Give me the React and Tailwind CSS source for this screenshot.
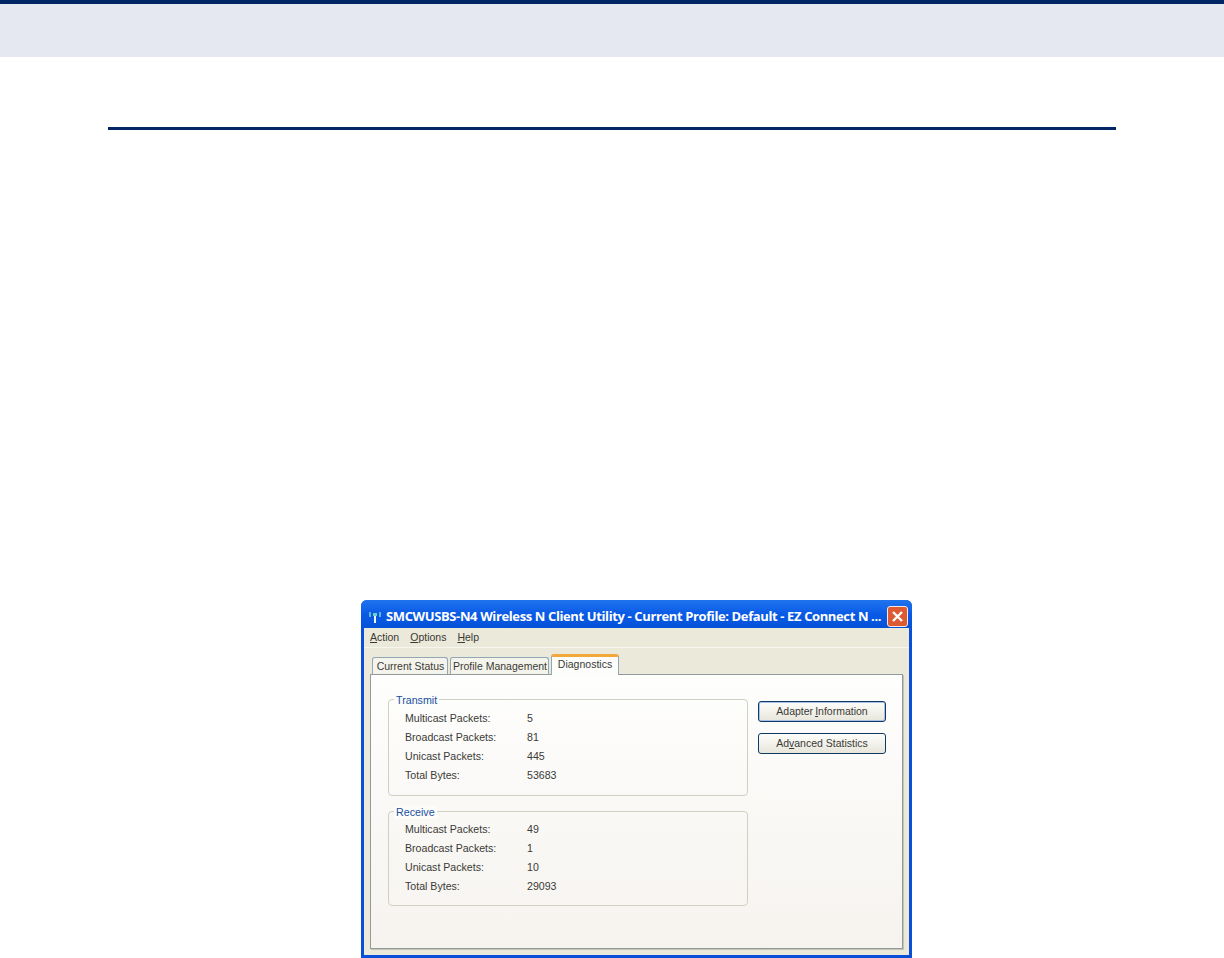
const font = "[font-family:'Liberation_Sans',Arial,sans-serif]";

function Group({ title, rows, className }) {
  return (
    <div className={`relative w-[360px] rounded-[4px] border border-[#d0d0bf] pl-[16px] ${className}`}>
      <span className="absolute left-[5px] top-[-6px] bg-[#fcfcfa] px-[2px] text-[10.7px] leading-[13px] text-[#1b4ea3]">{title}</span>
      {rows.map(([k, v]) => (
        <div key={k} className="flex h-[19px] items-center text-[10.6px] text-[#3a3a36]">
          <span className="w-[122px]">{k}</span>
          <span>{v}</span>
        </div>
      ))}
    </div>
  );
}

function Tab({ children, active, className }) {
  return active ? (
    <div className={`relative z-10 mb-[-1px] flex h-[21px] items-start justify-center whitespace-nowrap rounded-t-[3px] border-x border-[#91a7b4] border-t-[3px] border-t-[#f2a83a] bg-[#fdfdfb] text-[10.5px] leading-[14px] text-[#3a3a36] ${className}`}>
      {children}
    </div>
  ) : (
    <div className={`flex h-[17px] items-center justify-center whitespace-nowrap rounded-t-[3px] border-x border-t border-[#91a7b4] bg-[#f5f4ec] pl-[1px] pt-[1px] text-[10.5px] text-[#3a3a36] ${className}`}>
      {children}
    </div>
  );
}

function Btn({ children, focus }) {
  return (
    <div className={`flex h-[21px] w-[128px] items-center justify-center rounded-[3px] border border-[#0f3a63] bg-gradient-to-b from-[#fdfdfb] to-[#e8e6da] text-[10.5px] text-[#3a3a36] ${focus ? "shadow-[inset_0_0_0_1px_#a9c0e6]" : ""}`}>
      {children}
    </div>
  );
}

export default function App() {
  return (
    <div className={`h-[958px] w-[1224px] overflow-hidden bg-white ${font}`}>
      <div className="h-[57px] border-t-[4px] border-[#002664] bg-[#e5e8f1]" />
      <div className="mx-[108px] mt-[70px] h-[3px] w-[1008px] bg-[#002664]" />

      <div className="ml-[361px] mt-[470px] w-[551px] rounded-t-[6px] bg-[#0a4fd8]">
        <div className="flex h-[28px] items-center rounded-t-[6px] bg-gradient-to-b from-[#1f74ee] via-[#0a5ae6] to-[#0552d8] pl-[6px] pr-[4px]">
          <svg width="16" height="16" viewBox="0 0 16 16" className="mt-[3px] shrink-0">
            <path d="M7 8h2v7H7z" fill="#e8f6f4" />
            <path d="M6 5h4v3H6z" fill="#6fd0c8" />
            <path d="M2 4h2v5H2zM12 4h2v5h-2z" fill="#5fb4dc" />
          </svg>
          <span className="ml-[3px] mt-[5px] min-w-0 flex-1 overflow-hidden whitespace-nowrap font-bold text-[13px] tracking-[-0.38px] text-white [font-family:'Open_Sans',sans-serif]">
            SMCWUSBS-N4 Wireless N Client Utility - Current Profile: Default - EZ Connect N ...
          </span>
          <div className="mt-[4px] flex h-[21px] w-[21px] shrink-0 items-center justify-center rounded-[3px] border border-[#f4e8e2] bg-[#dd5a32]">
            <svg width="13" height="13" viewBox="0 0 13 13">
              <path d="M2 2l9 9M11 2l-9 9" stroke="#fff" strokeWidth="2.4" />
            </svg>
          </div>
        </div>
        <div className="mx-[3px] flex h-[20px] items-center gap-[11px] border-b border-[#f7f6ee] bg-[#ebe9d9] pl-[6px] text-[10.5px] text-[#3a3a36]">
          <span><u>A</u>ction</span>
          <span><u>O</u>ptions</span>
          <span><u>H</u>elp</span>
        </div>
        <div className="mx-[3px] h-[307px] bg-[#ebe9d9] px-[6px]">
          <div className="flex h-[26px] items-end gap-[2px] pl-[2px] pt-[6px]">
            <Tab className="w-[76px]">Current Status</Tab>
            <Tab className="w-[99px]">Profile Management</Tab>
            <Tab active className="w-[68px]">Diagnostics</Tab>
          </div>
          <div className="flex h-[275px] w-[533px] gap-[10px] border border-[#919b9c] bg-gradient-to-b from-[#fefefd] to-[#f6f3ef] pl-[17px] pt-[24px] shadow-[1px_1px_0_#c4c3b6]">
            <div className="flex flex-col">
              <Group
                title="Transmit"
                className="h-[97px] pt-[9px]"
                rows={[["Multicast Packets:", "5"], ["Broadcast Packets:", "81"], ["Unicast Packets:", "445"], ["Total Bytes:", "53683"]]}
              />
              <Group
                title="Receive"
                className="mt-[15px] h-[95px] pt-[8px]"
                rows={[["Multicast Packets:", "49"], ["Broadcast Packets:", "1"], ["Unicast Packets:", "10"], ["Total Bytes:", "29093"]]}
              />
            </div>
            <div className="flex flex-col gap-[11px] pt-[2px]">
              <Btn focus>Adapter <u className="ml-[2px]">I</u>nformation</Btn>
              <Btn>Ad<u>v</u>anced Statistics</Btn>
            </div>
          </div>
        </div>
        <div className="h-[3px]" />
      </div>
    </div>
  );
}
